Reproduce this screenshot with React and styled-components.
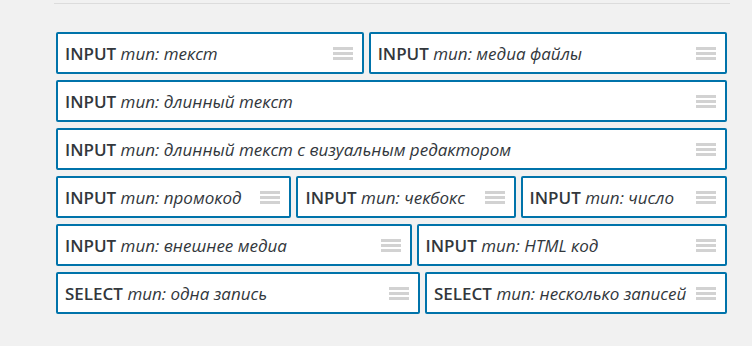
import React from 'react';
import styled, {createGlobalStyle} from 'styled-components';

const GlobalStyle = createGlobalStyle`
  html, body {
    margin: 0;
    padding: 0;
    background: #f1f1f1;
  }
  body {
    font-family: "Open Sans", "Noto Sans", sans-serif;
  }
`;

const Page = styled.div`
  padding: 3px 22px 0 54px;
  width: 752px;
  height: 346px;
  box-sizing: border-box;
`;

const Divider = styled.hr`
  margin: 0;
  border: none;
  border-top: 1px solid #dcdcdc;
  width: 676px;
`;

const FieldList = styled.div`
  display: flex;
  flex-direction: column;
  gap: 6px;
  margin: 28px 0 0 2px;
  width: 671px;
`;

const Row = styled.div`
  display: flex;
  gap: 5px;
`;

const Field = styled.div`
  flex: ${props => props.grow} 1 0;
  min-width: 0;
  height: 42px;
  box-sizing: border-box;
  border: 2px solid #0073aa;
  border-radius: 2px;
  background: #fff;
  display: flex;
  align-items: center;
  justify-content: space-between;
  padding: 0 9px 0 7px;
  white-space: nowrap;
  overflow: hidden;
`;

const Label = styled.span`
  font-size: 17px;
  color: #32373c;

  & b {
    font-weight: 600;
  }

  & i {
    font-size: 17px;
    color: #32373c;
  }
`;

const Handle = styled.svg`
  flex: none;
  width: 20px;
  height: 13px;
`;

const DragHandle = () => (
    <Handle viewBox="0 0 20 13">
        <rect x="0" y="0" width="20" height="3" fill="#d2d2d2"/>
        <rect x="0" y="5" width="20" height="3" fill="#d2d2d2"/>
        <rect x="0" y="10" width="20" height="3" fill="#d2d2d2"/>
    </Handle>
);

const rows = [
    [['INPUT', 'текст', 306], ['INPUT', 'медиа файлы', 360]],
    [['INPUT', 'длинный текст', 671]],
    [['INPUT', 'длинный текст с визуальным редактором', 671]],
    [['INPUT', 'промокод', 237], ['INPUT', 'чекбокс', 219], ['INPUT', 'число', 205]],
    [['INPUT', 'внешнее медиа', 357], ['INPUT', 'HTML код', 309]],
    [['SELECT', 'одна запись', 366], ['SELECT', 'несколько записей', 300]],
];

export default function App() {
    return (
        <>
            <GlobalStyle/>
            <Page>
                <Divider/>
                <FieldList>
                    {rows.map((row, i) => (
                        <Row key={i}>
                            {row.map(([tag, type, w]) => (
                                <Field key={type} grow={w}>
                                    <Label><b>{tag}</b> <i>тип: {type}</i></Label>
                                    <DragHandle/>
                                </Field>
                            ))}
                        </Row>
                    ))}
                </FieldList>
            </Page>
        </>
    );
}
